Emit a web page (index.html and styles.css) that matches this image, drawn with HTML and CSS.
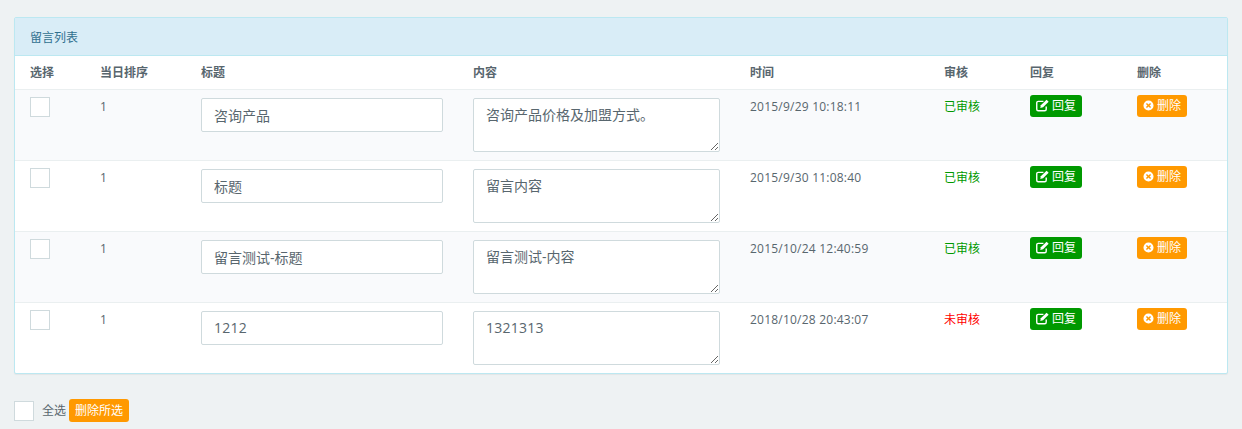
FILE: index.html
```html
<!DOCTYPE html>
<html lang="zh-CN">
<head>
<meta charset="utf-8">
<title>留言列表</title>
<link rel="stylesheet" href="styles.css">
</head>
<body>
<svg class="defs" width="0" height="0" aria-hidden="true">
  <symbol id="i-edit" viewBox="0 0 14 14">
    <path d="M11 8.2v2.9a1.6 1.6 0 0 1-1.6 1.6H2.4A1.6 1.6 0 0 1 .8 11.100V4.100a1.600 1.600 0 0 1 1.600-1.600H8" fill="none" stroke="currentColor" stroke-width="1.5"/>
    <path d="M11.400.8l2.200 2.200L7.600 9l-3 .6.600-3z" fill="currentColor"/>
  </symbol>
  <symbol id="i-times" viewBox="0 0 12 12">
    <path fill-rule="evenodd" d="M6 .5a5.500 5.500 0 1 1 0 11 5.500 5.500 0 0 1 0-11zM4.300 3.200L3.200 4.300 4.900 6 3.200 7.700l1.100 1.100L6 7.100l1.700 1.700 1.100-1.100L7.100 6l1.700-1.700-1.100-1.100L6 4.900z" fill="currentColor"/>
  </symbol>
</svg>
<section class="panel">
  <div class="panel-heading">留言列表</div>
  <table class="list">
    <colgroup>
      <col class="c1"><col class="c2"><col class="c3"><col class="c4"><col class="c5"><col class="c6"><col class="c7"><col class="c8">
    </colgroup>
    <thead>
      <tr><th>选择</th><th>当日排序</th><th>标题</th><th>内容</th><th>时间</th><th>审核</th><th>回复</th><th>删除</th></tr>
    </thead>
    <tbody>
      <tr>
        <td><span class="check"></span></td><td>1</td>
        <td><input class="field" type="text" value="咨询产品"></td>
        <td><textarea class="area">咨询产品价格及加盟方式。</textarea></td>
        <td class="time">2015/9/29 10:18:11</td><td class="ok">已审核</td>
        <td><a class="btn green"><svg class="ico"><use href="#i-edit"/></svg>回复</a></td>
        <td><a class="btn orange"><svg class="ico small"><use href="#i-times"/></svg>删除</a></td>
      </tr>
      <tr>
        <td><span class="check"></span></td><td>1</td>
        <td><input class="field" type="text" value="标题"></td>
        <td><textarea class="area">留言内容</textarea></td>
        <td class="time">2015/9/30 11:08:40</td><td class="ok">已审核</td>
        <td><a class="btn green"><svg class="ico"><use href="#i-edit"/></svg>回复</a></td>
        <td><a class="btn orange"><svg class="ico small"><use href="#i-times"/></svg>删除</a></td>
      </tr>
      <tr>
        <td><span class="check"></span></td><td>1</td>
        <td><input class="field" type="text" value="留言测试-标题"></td>
        <td><textarea class="area">留言测试-内容</textarea></td>
        <td class="time">2015/10/24 12:40:59</td><td class="ok">已审核</td>
        <td><a class="btn green"><svg class="ico"><use href="#i-edit"/></svg>回复</a></td>
        <td><a class="btn orange"><svg class="ico small"><use href="#i-times"/></svg>删除</a></td>
      </tr>
      <tr>
        <td><span class="check"></span></td><td>1</td>
        <td><input class="field num" type="text" value="1212"></td>
        <td><textarea class="area num">1321313</textarea></td>
        <td class="time">2018/10/28 20:43:07</td><td class="no">未审核</td>
        <td><a class="btn green"><svg class="ico"><use href="#i-edit"/></svg>回复</a></td>
        <td><a class="btn orange"><svg class="ico small"><use href="#i-times"/></svg>删除</a></td>
      </tr>
    </tbody>
  </table>
</section>
<footer class="actions">
  <span class="check"></span>
  <span class="all">全选</span>
  <a class="btn orange wide">删除所选</a>
</footer>
</body>
</html>
```
FILE: styles.css
```css
* { box-sizing: border-box; }
html, body { height: 100%; }
body {
  margin: 0;
  padding: 17px 14px 0;
  background: #eef2f3;
  color: #58666e;
  font: 12px/18px "Open Sans", "Noto Sans CJK SC", sans-serif;
  overflow: hidden;
}
.defs { position: absolute; }
.panel {
  border: 1px solid #bce8f1;
  border-radius: 2px;
  background: #fff;
  box-shadow: 0 1px 1px rgba(0,0,0,.05);
}
.panel-heading {
  height: 38px;
  padding: 10px 15px 8px;
  background: #d9edf7;
  border-bottom: 1px solid #bce8f1;
  color: #31708f;
  line-height: 19px;
}
.list { width: 100%; border-collapse: collapse; table-layout: fixed; }
.c1 { width: 70px; } .c2 { width: 101px; } .c3 { width: 272px; } .c4 { width: 277px; }
.c5 { width: 194px; } .c6 { width: 86px; } .c7 { width: 107px; } .c8 { width: 105px; }
th {
  height: 33px;
  padding: 2px 15px 0;
  text-align: left;
  font-weight: 700;
  border-bottom: 1px solid #eaeff0;
}
td {
  height: 71px;
  padding: 8px 15px 0;
  vertical-align: top;
  border-top: 1px solid #eaeff0;
  line-height: 18px;
}
thead + tbody tr:first-child td { border-top: 0; }
tbody tr:nth-child(odd) td { background: #f9fafc; }
.check {
  display: block;
  width: 20px;
  height: 20px;
  background: #fff;
  border: 1px solid #cfdadd;
}
td .check { margin-top: -1px; }
.field, .area {
  display: block;
  background: #fff;
  border: 1px solid #cfdadd;
  border-radius: 2px;
  color: #58666e;
  font: 14px/20px "Open Sans", "Noto Sans CJK SC", sans-serif;
  outline: 0;
  margin: 0;
}
.field { width: 242px; height: 34px; padding: 6px 12px; }
.area { width: 247px; height: 54px; padding: 6px 12px; resize: both; }
.num { letter-spacing: .25px; }
.time { letter-spacing: .22px; }
.ok { color: #090; }
.no { color: #f00; }
.btn {
  display: inline-flex;
  align-items: center;
  height: 22px;
  border-radius: 3px;
  color: #fff;
  font-size: 12px;
  line-height: 18px;
  padding: 0 6px;
  margin-top: -3px;
  vertical-align: top;
}
.green { background: #090; width: 52px; }
.orange { background: #f90; width: 50px; }
.ico { width: 13px; height: 13px; margin-right: 3px; flex: none; }
.ico.small { width: 11px; height: 11px; margin-right: 3px; }
.actions {
  display: flex;
  align-items: center;
  margin-top: 25px;
  height: 23px;
}
.all { margin-left: 8px; }
.btn.wide { width: 60px; height: 23px; margin: 0 0 0 3px; padding: 0 6px; white-space: nowrap; }
```
